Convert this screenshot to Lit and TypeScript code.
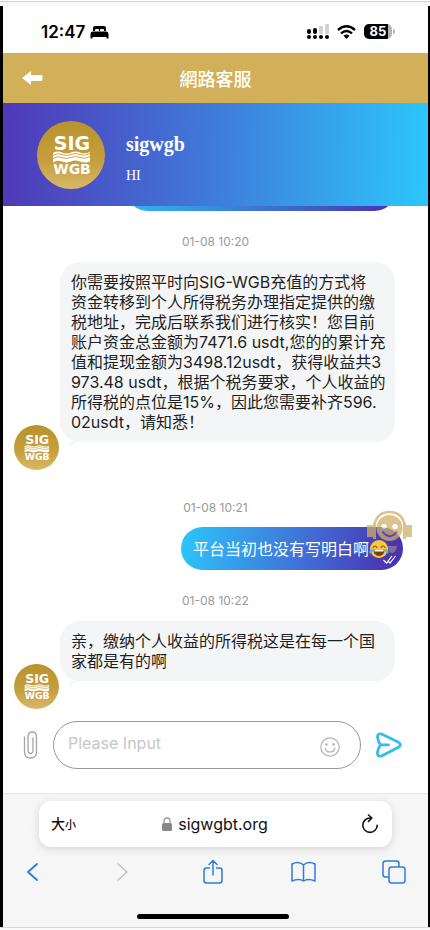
import { LitElement, html, css, svg } from "lit";
import { customElement } from "lit/decorators.js";

@customElement("sig-logo")
class SigLogo extends LitElement {
  static styles = css`
    :host { display: block; flex: none; width: 45px; height: 45px; }
    .disc { display: block; width: 100%; height: 100%; }
    .word { font-family: "DejaVu Sans", sans-serif; font-weight: 700; fill: #fff; text-anchor: middle; }
    .top { font-size: 19px; }
    .bottom { font-size: 14px; }
  `;
  render() {
    return html`<svg class="disc" viewBox="0 0 68 68" role="img" aria-label="SIG WGB">
      <defs>
        <linearGradient id="gold" x1="0" y1="0" x2="0" y2="1">
          <stop offset="0" stop-color="#b8922a" />
          <stop offset="0.6" stop-color="#c6a040" />
          <stop offset="1" stop-color="#d9b868" />
        </linearGradient>
      </defs>
      <circle cx="34" cy="34" r="34" fill="url(#gold)" />
      <text class="word top" x="35" y="29">SIG</text>
      <path fill="#fff" d="M16 32 Q20.500 29.500 25 31.500 T34 31.500 T43 31.500 T53 31 V40.500 Q48 42.500 43 40.500 T34 40.500 T25 40.500 T16 41.500 Z" />
      <path fill="none" stroke="#c29c3a" stroke-width="0.900" d="M16 34.500 Q20.500 31.500 25 33.500 T34 33.500 T43 33.500 T53 32.500 M16 37.500 Q20.500 34.500 25 36.500 T34 36.500 T43 36.500 T53 35.500" />
      <text class="word bottom" x="35" y="53">WGB</text>
    </svg>`;
  }
}

interface Message {
  time: string;
  side: "agent" | "me";
  text: string;
}

const messages: Message[] = [
  {
    time: "01-08 10:20",
    side: "agent",
    text: [
      "你需要按照平时向SIG-WGB充值的方式将",
      "资金转移到个人所得税务办理指定提供的缴",
      "税地址，完成后联系我们进行核实！您目前",
      "账户资金总金额为7471.6 usdt,您的的累计充",
      "值和提现金额为3498.12usdt，获得收益共3",
      "973.48 usdt，根据个税务要求，个人收益的",
      "所得税的点位是15%，因此您需要补齐596.",
      "02usdt，请知悉！",
    ].join("\n"),
  },
  { time: "01-08 10:21", side: "me", text: "平台当初也没有写明白啊" },
  {
    time: "01-08 10:22",
    side: "agent",
    text: "亲，缴纳个人收益的所得税这是在每一个国\n家都是有的啊",
  },
];

const joyFace = svg`
  <circle cx="10" cy="10" r="9" fill="#fcc93a" />
  <path d="M4.500 10.500 H15.500 Q15.500 17 10 17 T4.500 10.500 Z" fill="#7b3d16" />
  <path d="M5.500 10.500 H14.500 V12.500 H5.500 Z" fill="#fff" />
  <path d="M4 8.500 Q6 5.500 8 8.500 M12 8.500 Q14 5.500 16 8.500" fill="none" stroke="#8a4b17" stroke-width="1.200" stroke-linecap="round" />
  <path d="M4.500 10 Q-0.500 10.500 0.500 14 Q3 16 4.500 10 Z M15.500 10 Q20.500 10.500 19.500 14 Q17 16 15.500 10 Z" fill="#55b4ee" />`;

@customElement("app-root")
class AppRoot extends LitElement {
  static styles = css`
    * { box-sizing: border-box; }
    :host {
      display: block;
      background: #f8f8f8;
      font-family: Inter, "Noto Sans CJK SC", sans-serif;
      color: #1d1f22;
    }
    button { border: 0; padding: 0; background: none; font: inherit; color: inherit; display: block; flex: none; }
    svg { display: block; }
    .page { min-height: 100vh; display: flex; flex-direction: column; border-top: 1px solid #fff; border-bottom: 2px solid #fafafa; }
    .edge { height: 5px; border-top: 1px solid #d0d0d0; background: #f8f8f8; }
    .phone {
      flex: 1; display: flex; flex-direction: column; background: #fff;
      border-left: 3px solid #000; border-right: 2px solid #000;
    }
    .floor { height: 1px; background: #d8d8d8; }
    .status { height: 47px; display: flex; align-items: center; justify-content: space-between; padding: 4px 33px 0 38px; color: #000; }
    .clock { display: flex; align-items: center; gap: 5px; font-size: 17px; line-height: 20px; font-weight: 600; }
    .signals { display: flex; align-items: center; gap: 8px; }
    .battery { display: flex; align-items: center; gap: 1px; }
    .charge {
      width: 28px; height: 15px; border-radius: 5px; text-align: center;
      background: linear-gradient(90deg, #000 85%, #b5b5b5 85%);
      color: #fff; font-size: 13px; line-height: 15px; font-weight: 700;
    }
    .nub { width: 2px; height: 5px; border-radius: 0 2px 2px 0; background: #b5b5b5; }
    .title { height: 50px; background: #d2b059; display: grid; grid-template-columns: 56px 1fr 56px; align-items: center; color: #fff; }
    .back { margin-left: 19px; }
    .title h1 { margin: 0; text-align: center; font-size: 18px; line-height: 24px; font-weight: 500; font-family: "Noto Sans CJK TC", sans-serif; }
    .profile {
      height: 103px; display: flex; align-items: center; gap: 21px; padding: 0 34px;
      background: linear-gradient(92deg, #5038b8, #3f7cda 50%, #2cc6fc);
      color: #fff; font-family: "Liberation Serif", serif;
    }
    .portrait { width: 68px; height: 68px; }
    .who { padding-top: 6px; }
    .name { margin: 0 0 12px; font-size: 20px; line-height: 24px; font-weight: 700; }
    .hello { margin: 0; font-size: 14px; line-height: 16px; }
    .chat { flex: 1; display: flex; flex-direction: column; overflow: hidden; }
    .earlier { flex: none; align-self: flex-end; width: 270px; height: 43px; margin: -38px 32px 0 0; border-radius: 22px; background: linear-gradient(90deg, #2fb8f4, #4a32b0); }
    .time { text-align: center; font-size: 12px; line-height: 14px; color: #999; margin: 24px 0 12px; }
    .row { display: flex; align-items: flex-end; padding: 0 33px 0 11px; margin-bottom: 7px; }
    .row:last-child { margin-bottom: 0; }
    .row.me { justify-content: flex-end; padding-right: 25px; margin-bottom: 0; position: relative; }
    .bubble { position: relative; font-size: 16px; line-height: 20px; white-space: pre-line; }
    .agent .bubble { flex: 1; min-width: 0; margin: 1px 0 28px 1px; padding: 10px 0 10px 11px; border-radius: 20px; background: #f3f5f7; }
    .tail { position: absolute; left: 10px; top: 100%; width: 10px; height: 6px; }
    .me .bubble { display: flex; align-items: center; height: 43px; padding: 0 14px 0 12px; border-radius: 22px; color: #fff; background: linear-gradient(100deg, #2cc6fc, #3f78da 50%, #4a32b0 95%); }
    .ticks { position: absolute; right: 7px; bottom: 6px; }
    .helper { position: absolute; right: 15px; top: -17px; opacity: 0.75; }
    .joy { position: relative; z-index: 1; }
    .composer { display: flex; align-items: center; padding: 12px 25px 24px 20px; }
    .field { flex: 1; min-width: 0; height: 48px; display: flex; align-items: center; margin: 0 14px 0 15px; padding: 0 20px 0 14px; border: 1px solid #999; border-radius: 24px; }
    .entry { flex: 1; min-width: 0; height: 24px; padding: 0; border: 0; outline: 0; background: none; font: 16px/24px Inter, "Noto Sans CJK SC", sans-serif; color: #1d1f22; margin-bottom: 4px; }
    .entry::placeholder { color: #c6c6c6; opacity: 1; }
    .smile { margin-top: 4px; }
    .browser { background: #f6f6f6; border-top: 1px solid #e6e6e6; padding: 7px 21px 8px 16px; }
    .address { height: 46px; margin: 0 15px 0 20px; padding: 0 13px 0 12px; border-radius: 12px; background: #fff; box-shadow: 0 2px 10px #0002; display: grid; grid-template-columns: 1fr auto 1fr; align-items: center; color: #111; }
    .size { justify-self: start; font-weight: 500; font-size: 14px; line-height: 20px; }
    .small { font-size: 11px; }
    .site { display: flex; align-items: center; gap: 6px; font-size: 16px; line-height: 20px; }
    .reload { justify-self: end; }
    .tools { display: flex; justify-content: space-between; align-items: center; height: 50px; color: #2b7de0; }
    .tool { width: 26px; display: flex; justify-content: center; }
    .off { color: #c2c2c6; }
    .home { width: 152px; height: 5px; border-radius: 3px; background: #000; margin: 17px auto 0; }
  `;

  private message(m: Message) {
    return html`
      <div class="time">${m.time}</div>
      ${m.side === "agent"
        ? html`<div class="row agent">
            <sig-logo></sig-logo>
            <div class="bubble">${m.text}<svg class="tail" viewBox="0 0 10 6"><path d="M0 0H10Q2 0 1 6Z" fill="#f3f5f7" /></svg></div>
          </div>`
        : html`<div class="row me">
            <div class="bubble">${m.text}<svg class="joy" width="20" height="20" viewBox="0 0 20 20" role="img" aria-label="😂">${joyFace}</svg>
              <svg class="ticks" width="13" height="9" viewBox="0 0 13 9" fill="none" stroke="#fff" stroke-width="1.200"><path d="M0.500 5 L3.500 8 L9 1 M5.500 6.500 L7 8 L12.500 1" /></svg>
            </div>
            <svg class="helper" width="47" height="45" viewBox="0 0 47 45" role="img" aria-label="客服">
              <path d="M8 17 Q10 2 23.500 2 T39 17" fill="none" stroke="#cfb067" stroke-width="2.500" />
              <path fill="#cfb067" d="M1 15h7v12H1zM39 15h7v12h-7zM7 13h3v16H7zM37 13h3v16h-3z" />
              <path fill="#cfb067" fill-rule="evenodd" d="M23.500 5a13 13 0 1 1 0 26a13 13 0 1 1 0-26zM15.500 16.500a2.500 2.500 0 1 0 5 0a2.500 2.500 0 1 0-5 0zM26.500 16.500a2.500 2.500 0 1 0 5 0a2.500 2.500 0 1 0-5 0z" />
              <circle cx="18" cy="16.500" r="2.500" fill="#fff" /><circle cx="29" cy="16.500" r="2.500" fill="#fff" />
              <path d="M16.500 21.500Q23.500 31 31 21.500" fill="none" stroke="#4a43b6" stroke-width="1.800" />
              <path d="M22 36h9q-1 7-5 7t-4-7z" fill="#cfb067" opacity="0.6" />
            </svg>
          </div>`}
    `;
  }

  render() {
    return html`
      <div class="page">
        <div class="edge"></div>
        <div class="phone">
          <div class="status">
            <div class="clock">12:47
              <svg width="19" height="14" viewBox="0 0 19 14"><path d="M3 6V3Q3 1 5 1H14Q16 1 16 3V6H14V5Q14 4 13 4H11Q10 4 10 5V6H9V5Q9 4 8 4H6Q5 4 5 5V6ZM2.500 6.500H16.500Q18.500 6.500 18.500 9V13.500H16.500V12H2.500V13.500H0.500V9Q0.500 6.500 2.500 6.500Z" /></svg>
            </div>
            <div class="signals">
              <svg width="23" height="16" viewBox="0 0 23 16">
                <rect x="1" y="5" width="4" height="5" rx="2" /><rect x="7" y="4" width="4" height="6" rx="2" />
                <rect x="13" y="2" width="4" height="8" rx="1" fill="#d2d2d2" /><rect x="19" y="0" width="4" height="10" rx="1" fill="#d2d2d2" />
                <circle cx="3" cy="13" r="2" /><circle cx="9" cy="13" r="2" /><circle cx="15" cy="13" r="2" /><circle cx="21" cy="13" r="2" />
              </svg>
              <svg width="19" height="14" viewBox="0 0 19 14"><path d="M1 5Q9.500-2.500 18 5M4 8.300Q9.500 3.500 15 8.300" fill="none" stroke="#000" stroke-width="2.400" /><path d="M6.500 10.800Q9.500 8.300 12.500 10.800L9.500 14Z" /></svg>
              <div class="battery"><div class="charge">85</div><div class="nub"></div></div>
            </div>
          </div>
          <header class="title">
            <button class="back" aria-label="返回"><svg width="21" height="16" viewBox="0 0 21 16" fill="#fff"><path d="M0 8L9 1V5H19.500Q20.500 5 20.500 6V10Q20.500 11 19.500 11H9V15Z" /></svg></button>
            <h1>網路客服</h1>
          </header>
          <section class="profile">
            <sig-logo class="portrait"></sig-logo>
            <div class="who"><h2 class="name">sigwgb</h2><p class="hello">HI</p></div>
          </section>
          <main class="chat">
            <div class="earlier"></div>
            ${messages.map((m) => this.message(m))}
          </main>
          <form class="composer" @submit=${(e: Event) => e.preventDefault()}>
            <button type="button" aria-label="附件"><svg width="15" height="30" viewBox="0 0 15 30" fill="none" stroke="#a5a5a5" stroke-width="1.300" stroke-linecap="round"><path d="M1.500 7V22Q1.500 28 7.500 28T13.500 22V7Q13.500 2 9.200 2T5 7V20Q5 23.500 7.500 23.500T10 20V8" /></svg></button>
            <div class="field">
              <input class="entry" type="text" placeholder="Please Input" aria-label="Please Input" />
              <button class="smile" type="button" aria-label="表情"><svg width="20" height="20" viewBox="0 0 20 20" fill="none" stroke="#b5b5b5" stroke-width="1.200"><circle cx="10" cy="10" r="9.200" /><path d="M5 11Q6 15 10 15T15 11" /><circle cx="6.500" cy="7.500" r="0.700" fill="#b5b5b5" /><circle cx="13.500" cy="7.500" r="0.700" fill="#b5b5b5" /></svg></button>
            </div>
            <button aria-label="发送"><svg width="28" height="26" viewBox="0 0 28 26" fill="none" stroke="#35bde8" stroke-width="2.800" stroke-linecap="round" stroke-linejoin="round"><path d="M6.500 2L23 10Q28 12.800 23 15.500L6.500 24Q2 25 2.500 20.500Q3 16 5.500 12.800Q3 10 2.500 5Q2.300 1 6.500 2ZM6 12.800H13.500" /></svg></button>
          </form>
          <footer class="browser">
            <div class="address">
              <button class="size">大<span class="small">小</span></button>
              <div class="site"><svg width="10" height="14" viewBox="0 0 10 14"><rect x="0" y="6" width="10" height="8" rx="1.500" fill="#888" /><path d="M2 7V4Q2 1 5 1T8 4V7" fill="none" stroke="#999" stroke-width="1.300" /></svg>sigwgbt.org</div>
              <button class="reload" aria-label="重新载入"><svg width="18" height="20" viewBox="0 0 18 20" fill="none" stroke="#111" stroke-width="1.600" stroke-linecap="round" stroke-linejoin="round"><path d="M10 4H9A7.200 7.200 0 1 0 16.200 11.200M7.500 1L10.800 4L7.500 7.500" /></svg></button>
            </div>
            <nav class="tools">
              <button class="tool" aria-label="后退"><svg width="12" height="20" viewBox="0 0 12 20" fill="none" stroke="currentColor" stroke-width="1.800" stroke-linecap="round" stroke-linejoin="round"><path d="M11 2L2 10L11 18" /></svg></button>
              <button class="tool off" aria-label="前进" disabled><svg width="12" height="20" viewBox="0 0 12 20" fill="none" stroke="currentColor" stroke-width="1.600" stroke-linecap="round" stroke-linejoin="round"><path d="M1 2L10 10L1 18" /></svg></button>
              <button class="tool" aria-label="分享"><svg width="20" height="26" viewBox="0 0 20 26" fill="none" stroke="currentColor" stroke-width="1.500" stroke-linecap="round" stroke-linejoin="round"><path d="M6.500 9H3.500Q1 9 1 11.500V21.500Q1 24 3.500 24H16.500Q19 24 19 21.500V11.500Q19 9 16.500 9H13.500M10 16V2M6 5.500L10 1.500L14 5.500" /></svg></button>
              <button class="tool" aria-label="书签"><svg width="25" height="22" viewBox="0 0 25 22" fill="none" stroke="currentColor" stroke-width="1.500" stroke-linejoin="round"><path d="M12.500 4Q8-0.500 1 3V20Q8 17 12.500 20Q17 17 24 20V3Q17-0.500 12.500 4V20" /></svg></button>
              <button class="tool" aria-label="标签页"><svg width="24" height="24" viewBox="0 0 24 24" fill="none" stroke="currentColor" stroke-width="1.500"><rect x="7" y="7" width="16" height="16" rx="2.500" /><path d="M7 17H3.500Q1 17 1 14.500V3.500Q1 1 3.500 1H14.500Q17 1 17 3.500V7" /></svg></button>
            </nav>
            <div class="home"></div>
          </footer>
        </div>
        <div class="floor"></div>
      </div>
    `;
  }
}
